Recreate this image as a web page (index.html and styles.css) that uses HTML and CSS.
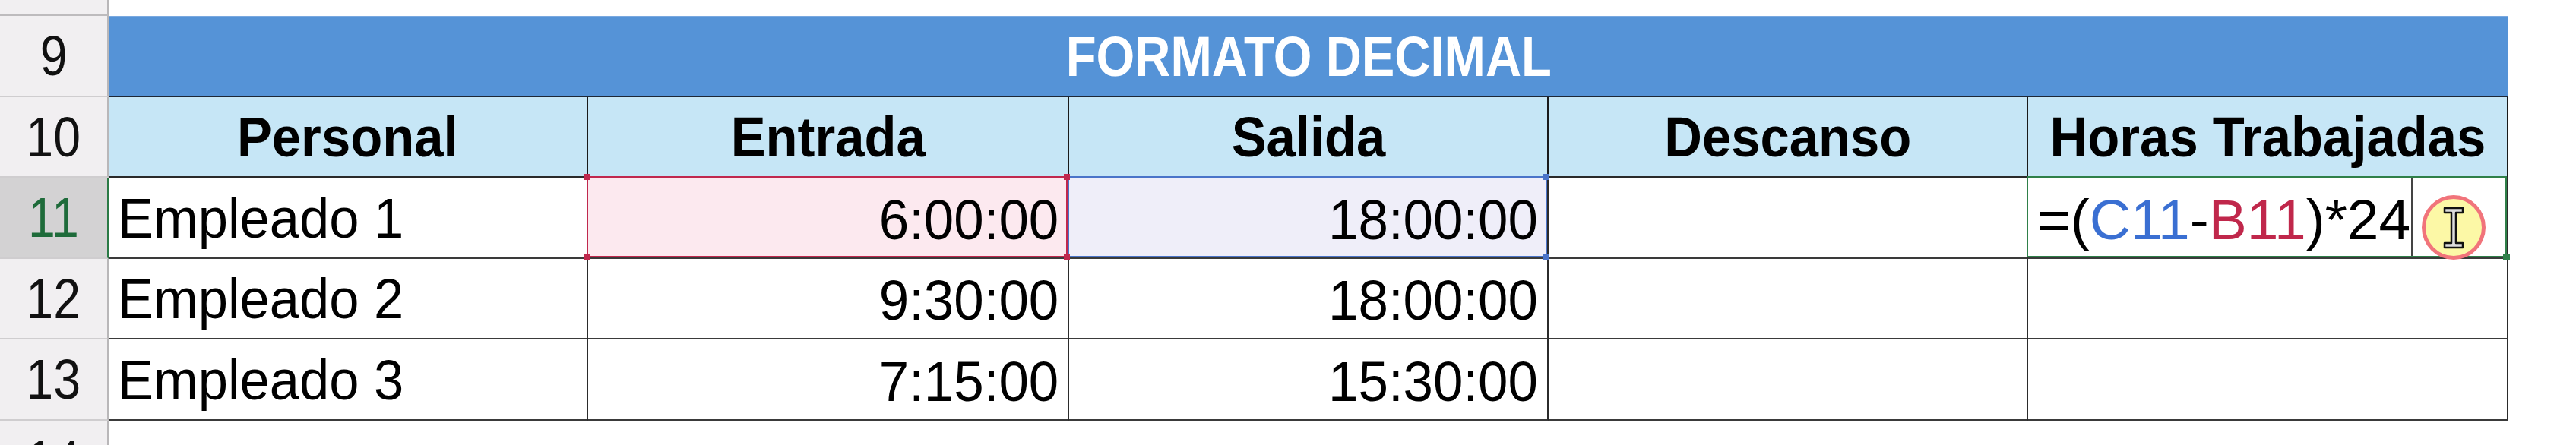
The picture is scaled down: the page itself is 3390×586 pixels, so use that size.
FILE: index.html
```html
<!DOCTYPE html>
<html lang="es">
<head>
<meta charset="utf-8">
<title>Formato decimal</title>
<link rel="stylesheet" href="styles.css">
</head>
<body>
<div class="sheet">
  <div class="rh top"></div>
  <div class="c blank"></div><div class="c blank"></div><div class="c blank"></div><div class="c blank"></div><div class="c blank"></div>

  <div class="rh"><span class="t">9</span></div>
  <div class="c title"><span class="t">FORMATO DECIMAL</span></div>

  <div class="rh"><span class="t">10</span></div>
  <div class="c hdr"><span class="t">Personal</span></div>
  <div class="c hdr"><span class="t">Entrada</span></div>
  <div class="c hdr"><span class="t">Salida</span></div>
  <div class="c hdr"><span class="t">Descanso</span></div>
  <div class="c hdr"><span class="t">Horas Trabajadas</span></div>

  <div class="rh active"><span class="t">11</span></div>
  <div class="c txt"><span class="t">Empleado 1</span></div>
  <div class="c num ref-b"><span class="t">6:00:00</span>
    <div class="frame frame-b"><span class="h tl"></span><span class="h tr"></span><span class="h bl"></span><span class="h br"></span></div>
  </div>
  <div class="c num ref-c"><span class="t">18:00:00</span>
    <div class="frame frame-c"><span class="h tr"></span><span class="h br"></span></div>
  </div>
  <div class="c"></div>
  <div class="c txt edit">
    <span class="formula">=(<span class="rc">C11</span>-<span class="rb">B11</span>)*24</span><span class="caret"></span>
    <div class="frame frame-e"><span class="fill"></span></div>
    <div class="spot">
      <svg viewBox="0 0 28 56" width="28" height="56" aria-hidden="true">
        <path d="M2 2 H26 V8 H17 V48 H26 V54 H2 V48 H11 V8 H2 Z" fill="#dcdcdc" stroke="#111" stroke-width="2.5" stroke-linejoin="round"/>
      </svg>
    </div>
  </div>

  <div class="rh"><span class="t">12</span></div>
  <div class="c txt"><span class="t">Empleado 2</span></div>
  <div class="c num"><span class="t">9:30:00</span></div>
  <div class="c num"><span class="t">18:00:00</span></div>
  <div class="c"></div>
  <div class="c"></div>

  <div class="rh"><span class="t">13</span></div>
  <div class="c txt"><span class="t">Empleado 3</span></div>
  <div class="c num"><span class="t">7:15:00</span></div>
  <div class="c num"><span class="t">15:30:00</span></div>
  <div class="c"></div>
  <div class="c"></div>

  <div class="rh"><span class="t">14</span></div>
  <div class="c blank"></div><div class="c blank"></div><div class="c blank"></div><div class="c blank"></div><div class="c blank"></div>
</div>
</body>
</html>
```

FILE: styles.css
```css
* { box-sizing: border-box; }

html, body {
  margin: 0;
  padding: 0;
  background: #ffffff;
  height: 586px;
  overflow: hidden;
}

.sheet {
  display: grid;
  grid-template-columns: 143px 631px 633px 631px 631px 632px;
  grid-template-rows: 21px 107px 106px 107px 106px 107px 107px;
  font-family: "Liberation Sans", Arial, sans-serif;
  color: #000;
}

.t {
  display: inline-block;
  transform-origin: center center;
}

.rh {
  background: #f1eff1;
  border-right: 2px solid #b9b7b9;
  border-bottom: 2px solid #cfcdcf;
  display: flex;
  align-items: center;
  justify-content: center;
  font-size: 74px;
  color: #111;
}
.rh .t { transform: scaleX(0.87); }

.rh.top { border-bottom-color: #bdbbbd; }

.rh.active {
  background: #d3d2d3;
  color: #1e6b3a;
  border-right: 2px solid #2a7a45;
}

.c {
  position: relative;
  background: #fff;
  border-right: 2px solid #2b2b2b;
  border-bottom: 2px solid #3a3a3a;
  display: flex;
  align-items: center;
  padding: 0 12px;
  white-space: nowrap;
  font-size: 75px;
}

.c.blank { border: none; }

.c.title {
  grid-column: span 5;
  background: #5593d7;
  border-top: 1px solid #7aa9e0;
  border-right: none;
  border-bottom: 2px solid #1d2736;
  justify-content: center;
  color: #fff;
  font-weight: bold;
  font-size: 75px;
}
.c.title .t { transform: scaleX(0.87); }

.c.hdr {
  background: #c6e6f6;
  justify-content: center;
  font-weight: bold;
  font-size: 74px;
  border-right-color: #1a1a1a;
  border-bottom-color: #2a2a2a;
}
.c.hdr .t { transform: scaleX(0.93); }

.c.txt .t {
  transform: scaleX(0.94);
  transform-origin: left center;
}

.c.num { justify-content: flex-end; padding-top: 4px; }
.c.num .t {
  transform: scaleX(0.945);
  transform-origin: right center;
}

.c.ref-b { background: #fce9ef; }
.c.ref-c { background: #efeef9; }

.frame {
  position: absolute;
  left: -2px;
  top: -2px;
  right: 0;
  bottom: 0;
  pointer-events: none;
}

.frame-b { border: 2px solid #c0284d; z-index: 3; }
.frame-c { border: 2px solid #4a74c9; z-index: 2; }
.frame-e { border: 2px solid #2f8049; z-index: 2; }

.h {
  position: absolute;
  width: 8px;
  height: 8px;
}
.frame-b .h { background: #c0284d; }
.frame-c .h { background: #4a74c9; }
.h.tl { left: -5px; top: -5px; }
.h.tr { right: -5px; top: -5px; }
.h.bl { left: -5px; bottom: -5px; }
.h.br { right: -5px; bottom: -5px; }

.fill {
  position: absolute;
  right: -6px;
  bottom: -6px;
  width: 9px;
  height: 9px;
  background: #2f8049;
}

.edit { align-items: center; }

.formula {
  font-size: 75px;
  padding-top: 4px;
}
.rc { color: #3a6fd2; }
.rb { color: #c0274b; }

.caret {
  align-self: flex-start;
  width: 2px;
  height: 103px;
  margin-left: 1px;
  background: #444;
}

.spot {
  position: absolute;
  left: 518px;
  top: 23px;
  width: 84px;
  height: 85px;
  border-radius: 50%;
  background: #fcf8a6;
  border: 5px solid #f1747b;
  display: flex;
  align-items: center;
  justify-content: center;
  z-index: 4;
}
.spot svg { display: block; }
```
